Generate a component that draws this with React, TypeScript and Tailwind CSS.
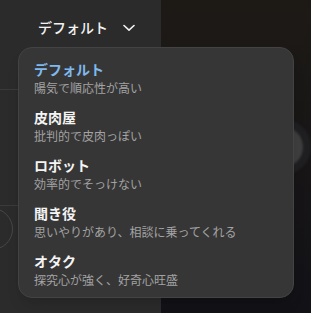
import React from "react";

const items = [
  { title: "デフォルト", desc: "陽気で順応性が高い", active: true },
  { title: "皮肉屋", desc: "批判的で皮肉っぽい" },
  { title: "ロボット", desc: "効率的でそっけない" },
  { title: "聞き役", desc: "思いやりがあり、相談に乗ってくれる" },
  { title: "オタク", desc: "探究心が強く、好奇心旺盛" },
];

const font = { fontFamily: '"Noto Sans CJK JP", "Noto Sans", sans-serif' };

export default function App() {
  return (
    <div className="relative w-[311px] h-[313px] overflow-hidden flex" style={font}>
      <div className="w-[165px] h-full bg-[#2b2b2b] flex flex-col">
        <div className="h-[90px] border-b border-[#3a3a3a]">
          <div className="h-[54px] flex items-center pl-[38px] gap-[15px]">
            <span className="text-[14px] leading-[20px] font-medium text-[#f2f2f2]">デフォルト</span>
            <svg width="12" height="8" viewBox="0 0 12 8" className="mt-[1px]">
              <path d="M1 1.5 L6 6.2 L11 1.5" fill="none" stroke="#f2f2f2" strokeWidth="1.6" strokeLinecap="round" strokeLinejoin="round" />
            </svg>
          </div>
        </div>
        <div className="h-[116px] border-b border-[#3a3a3a]" />
        <div className="w-[42px] h-[42px] rounded-full border border-[#474747] ml-[-29px] mt-[2px]" />
      </div>
      <div className="flex-1 h-full bg-gradient-to-b from-[#1d1a16] to-[#121116] pl-[94px] pt-[119px]">
        <div className="w-[56px] h-[56px] rounded-full bg-[#1f1f22] flex items-center justify-center blur-[1px]">
          <div className="w-[40px] h-[40px] rounded-full bg-[#3e3e3e]" />
        </div>
      </div>
      <div className="absolute left-[18px] top-[47px] w-[276px] h-[251px] rounded-[14px] bg-[#363636] border border-[#434343] shadow-lg py-[5px]">
        {items.map((it) => (
          <div key={it.title} className="h-[48px] px-[15px] flex flex-col justify-center">
            <div className={`text-[14px] leading-[20px] font-semibold ${it.active ? "text-[#7fb9ee] font-medium" : "text-[#f4f4f4]"}`}>
              {it.title}
            </div>
            <div className="text-[12px] leading-[17px] text-[#a3a3a3]">{it.desc}</div>
          </div>
        ))}
      </div>
    </div>
  );
}
